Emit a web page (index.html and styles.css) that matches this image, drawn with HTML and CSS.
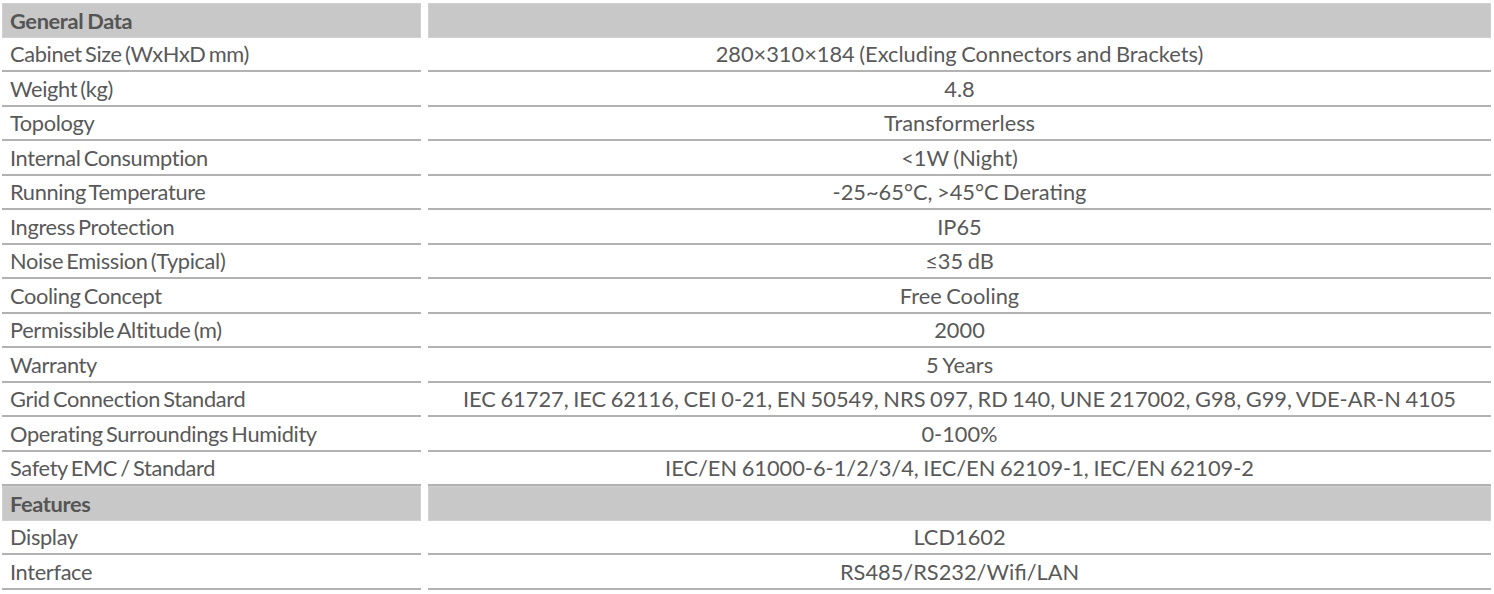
FILE: index.html
```html
<!DOCTYPE html>
<html lang="en">
<head>
    <meta charset="UTF-8">
    <title>Specifications</title>
    <link rel="stylesheet" href="styles.css">
</head>
<body>
    <div class="spec">
        <div class="row head"><div class="name">General Data</div><div class="val"></div></div>
        <div class="row"><div class="name">Cabinet Size (WxHxD mm)</div><div class="val">280×310×184 (Excluding Connectors and Brackets)</div></div>
        <div class="row"><div class="name">Weight (kg)</div><div class="val">4.8</div></div>
        <div class="row"><div class="name">Topology</div><div class="val">Transformerless</div></div>
        <div class="row"><div class="name">Internal Consumption</div><div class="val">&lt;1W (Night)</div></div>
        <div class="row"><div class="name">Running Temperature</div><div class="val">-25~65°C, &gt;45°C Derating</div></div>
        <div class="row"><div class="name">Ingress Protection</div><div class="val">IP65</div></div>
        <div class="row"><div class="name">Noise Emission (Typical)</div><div class="val">≤35 dB</div></div>
        <div class="row"><div class="name">Cooling Concept</div><div class="val">Free Cooling</div></div>
        <div class="row"><div class="name">Permissible Altitude (m)</div><div class="val">2000</div></div>
        <div class="row"><div class="name">Warranty</div><div class="val">5 Years</div></div>
        <div class="row"><div class="name">Grid Connection Standard</div><div class="val">IEC 61727, IEC 62116, CEI 0-21, EN 50549, NRS 097, RD 140, UNE 217002, G98, G99, VDE-AR-N 4105</div></div>
        <div class="row"><div class="name">Operating Surroundings Humidity</div><div class="val">0-100%</div></div>
        <div class="row"><div class="name">Safety EMC / Standard</div><div class="val">IEC/EN 61000-6-1/2/3/4, IEC/EN 62109-1, IEC/EN 62109-2</div></div>
        <div class="row head"><div class="name">Features</div><div class="val"></div></div>
        <div class="row"><div class="name">Display</div><div class="val">LCD1602</div></div>
        <div class="row"><div class="name">Interface</div><div class="val">RS485/RS232/Wifi/LAN</div></div>
    </div>
</body>
</html>
```

FILE: styles.css
```css
body {
    margin: 0;
    padding: 3px 2px;
    background-color: #fff;
    font-family: Lato, "Noto Sans", sans-serif;
    font-size: 21.8px;
    color: #595959;
}
.spec {
    width: 1489px;
}
.row {
    display: grid;
    grid-template-columns: 419px 1fr;
    column-gap: 7px;
    height: 34.5px;
}
.name,
.val {
    display: flex;
    align-items: center;
    box-sizing: border-box;
    border-bottom: 2px solid #b2b2b2;
    white-space: nowrap;
}
.name {
    padding-left: 8px;
    letter-spacing: -0.35px;
    word-spacing: -2px;
}
.val {
    justify-content: center;
    word-spacing: -1px;
}
.head .name,
.head .val {
    background-color: #c8c8c8;
    border: 1px solid #d0d0d0;
    font-weight: bold;
    color: #555;
}
.head .name {
    padding-left: 7px;
    word-spacing: -1px;
}
```
